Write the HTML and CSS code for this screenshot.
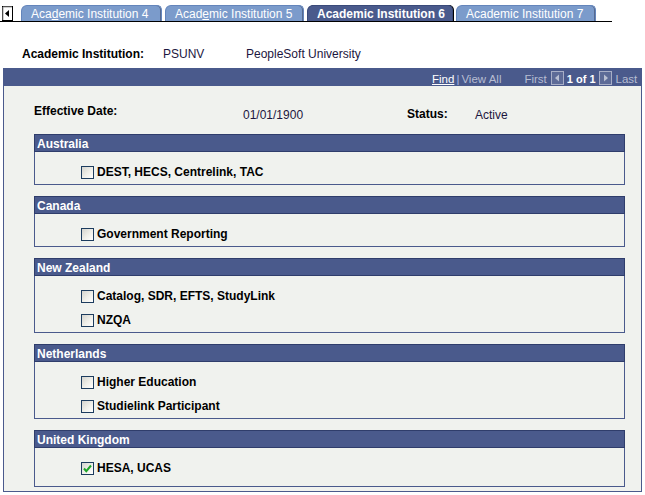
FILE: index.html
```html
<!DOCTYPE html>
<html>
<head>
<meta charset="utf-8">
<link rel="stylesheet" href="styles.css">
</head>
<body>
<div class="tabs">
  <span class="tab-scroll">
    <svg width="11" height="15" viewBox="0 0 11 15"><rect x="0.5" y="0.5" width="10" height="14" fill="#fff" stroke="#000"/><path d="M1 14V1h9" fill="none" stroke="#a0a0a0"/><path d="M7 4v7L3 7.5z" fill="#000"/></svg>
  </span>
  <span class="tab">Aca<u>d</u>emic Institution 4</span>
  <span class="tab">Acad<u>e</u>mic Institution 5</span>
  <span class="tab active">Academic Institution 6</span>
  <span class="tab">Academic Institution 7</span>
</div>

<div class="inst-row">
  <span class="lbl inst-lbl">Academic Institution:</span>
  <span class="val inst-code">PSUNV</span>
  <span class="val">PeopleSoft University</span>
</div>

<div class="panel">
  <div class="band">
    <a class="find">Find</a><span class="sep">|</span><span class="dim">View All</span>
    <span class="dim first">First</span>
    <svg class="nav-ico" width="13" height="14" viewBox="0 0 13 14"><rect x="0.5" y="0.5" width="12" height="13" fill="#5d6b97" stroke="#a7aec6"/><path d="M8 3.5v7L4 7z" fill="#b9bfd2"/></svg>
    <span class="count">1 of 1</span>
    <svg class="nav-ico" width="13" height="14" viewBox="0 0 13 14"><rect x="0.5" y="0.5" width="12" height="13" fill="#5d6b97" stroke="#a7aec6"/><path d="M5 3.5v7L9 7z" fill="#b9bfd2"/></svg>
    <span class="dim last">Last</span>
  </div>

  <div class="eff-row">
    <span class="lbl eff-lbl">Effective Date:</span>
    <span class="val eff-date">01/01/1900</span>
    <span class="lbl status-lbl">Status:</span>
    <span class="val status-val">Active</span>
  </div>

  <div class="groups">
    <section class="box">
      <div class="box-head">Australia</div>
      <div class="box-body">
        <label class="row"><span class="cb"></span>DEST, HECS, Centrelink, TAC</label>
      </div>
    </section>
    <section class="box">
      <div class="box-head">Canada</div>
      <div class="box-body">
        <label class="row"><span class="cb"></span>Government Reporting</label>
      </div>
    </section>
    <section class="box">
      <div class="box-head">New Zealand</div>
      <div class="box-body">
        <label class="row"><span class="cb"></span>Catalog, SDR, EFTS, StudyLink</label>
        <label class="row"><span class="cb"></span>NZQA</label>
      </div>
    </section>
    <section class="box">
      <div class="box-head">Netherlands</div>
      <div class="box-body">
        <label class="row"><span class="cb"></span>Higher Education</label>
        <label class="row"><span class="cb"></span>Studielink Participant</label>
      </div>
    </section>
    <section class="box last-box">
      <div class="box-head">United Kingdom</div>
      <div class="box-body">
        <label class="row"><span class="cb checked"><svg width="11" height="11" viewBox="0 0 11 11"><path d="M2 5.5l2.3 2.6L9 2.5" fill="none" stroke="#1fa52a" stroke-width="2"/></svg></span>HESA, UCAS</label>
      </div>
    </section>
  </div>
</div>
</body>
</html>
```

FILE: styles.css
```css
* { box-sizing: border-box; }

body {
  margin: 0;
  background: #fff;
  font-family: "Liberation Sans", Arial, sans-serif;
  font-size: 12px;
  line-height: 14px;
  color: #000;
}

.tabs {
  display: flex;
  align-items: flex-end;
  width: 612px;
  height: 22px;
  padding-left: 2px;
  border-bottom: 1px solid #000;
}

.tab-scroll {
  display: block;
  height: 15px;
  margin-right: 8px;
}
.tab-scroll svg { display: block; }

.tab {
  display: block;
  height: 16px;
  padding: 1px 0 0 9px;
  width: 141px;
  margin-right: 3px;
  background: #7b9bcb;
  color: #fff;
  border: 1px solid #6485bb;
  border-bottom: none;
  border-radius: 6px 5px 0 0;
  box-shadow: inset -1px 0 0 #55698f;
  white-space: nowrap;
}
.tab u { text-decoration: underline; }
.tab:nth-child(3) { width: 139px; }
.tab.active {
  width: 146px;
  margin-right: 3px;
  background: #4a5a8c;
  border-color: #3a4a7a;
  font-weight: bold;
  box-shadow: 1px 0 0 #000;
  padding-left: 9px;
}
.tab:last-child { width: 140px; margin-right: 0; }

.inst-row {
  display: flex;
  margin-top: 25px;
  padding-left: 22px;
  height: 14px;
}
.lbl { font-weight: bold; color: #000; }
.val { color: #1c1640; }
.inst-lbl { width: 141px; }
.inst-code { width: 83px; }

.panel {
  margin: 7px 0 0 3px;
  width: 639px;
  border: 1px solid #4a5a8c;
  background: #f0f2ee;
  padding-bottom: 4px;
}

.band {
  display: flex;
  align-items: flex-end;
  height: 18px;
  margin: -1px -1px 0;
  background: #4a5a8c;
  padding-left: 429px;
  font-size: 11.5px;
  line-height: 13px;
  color: #b7bdd2;
}
.band .find { color: #fff; text-decoration: underline; }
.band .sep { color: #a9b6e6; margin: 0 2px 0 2px; }
.band .first { margin-left: 23px; margin-right: 4px; }
.nav-ico { display: block; margin-bottom: 1px; }
.count { color: #fff; font-weight: bold; margin: 0 3px 0 3px; font-size: 11px; }
.last { margin-left: 4px; }

.eff-row {
  display: flex;
  align-items: flex-start;
  padding: 18px 0 0 30px;
  height: 48px;
}
.eff-lbl { width: 209px; }
.eff-date { width: 164px; margin-top: 4px; }
.status-lbl { width: 68px; margin-top: 3px; }
.status-val { margin-top: 4px; }

.groups {
  display: flex;
  flex-direction: column;
  gap: 11px;
  margin-left: 30px;
  width: 591px;
}

.box {
  border: 1px solid #4a5a8c;
}
.box-head {
  margin: -1px -1px 0;
  height: 18px;
  background: #4a5a8c;
  border: 1px solid #2f3d6b;
  color: #fff;
  font-weight: bold;
  padding: 2px 0 0 2px;
}
.box-body {
  padding: 8px 0 0 46px;
}
.last-box .box-body { padding-bottom: 6px; }

.row {
  display: flex;
  align-items: center;
  height: 24px;
  font-weight: bold;
}

.cb {
  display: block;
  width: 13px;
  height: 13px;
  margin-right: 3px;
  border: 1px solid #1c3c5e;
  background: linear-gradient(135deg, #d4d4ce 0%, #f0f0ea 55%, #ffffff 100%);
}
.cb svg { display: block; }
```
